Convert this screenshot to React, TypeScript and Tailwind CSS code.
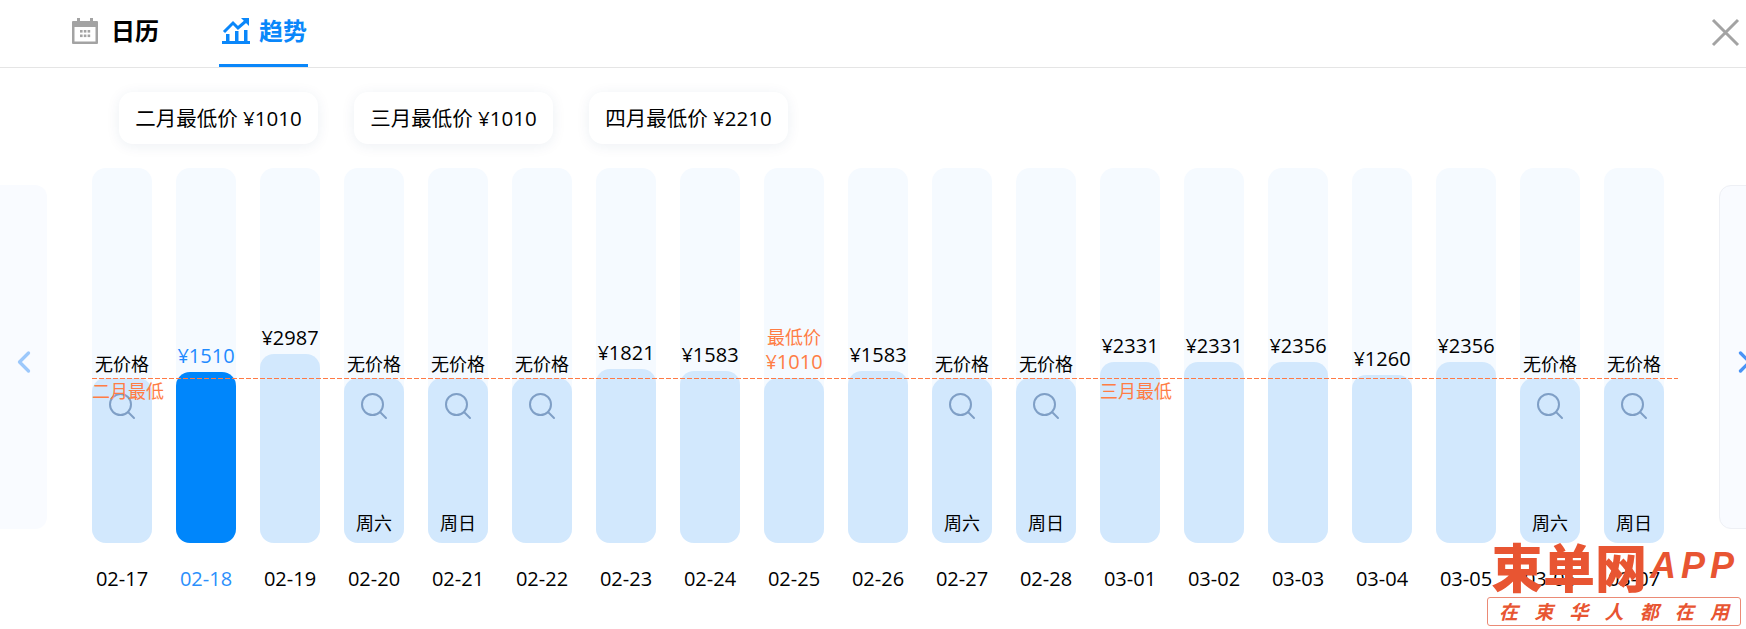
import { ChevronLeft, ChevronRight } from 'lucide-react';

interface DayItem {
  date: string;
  top: number; // y of the fill top, counted from the top of the track
  price?: string;
  week?: string;
  low?: boolean;
  active?: boolean;
}

const TRACK_H = 375;

const days: DayItem[] = [
  { date: '02-17', top: 210 },
  { date: '02-18', top: 204, price: '¥1510', active: true },
  { date: '02-19', top: 186, price: '¥2987' },
  { date: '02-20', top: 210, week: '周六' },
  { date: '02-21', top: 210, week: '周日' },
  { date: '02-22', top: 210 },
  { date: '02-23', top: 201, price: '¥1821' },
  { date: '02-24', top: 203, price: '¥1583' },
  { date: '02-25', top: 210, price: '¥1010', low: true },
  { date: '02-26', top: 203, price: '¥1583' },
  { date: '02-27', top: 210, week: '周六' },
  { date: '02-28', top: 210, week: '周日' },
  { date: '03-01', top: 194, price: '¥2331' },
  { date: '03-02', top: 194, price: '¥2331' },
  { date: '03-03', top: 194, price: '¥2356' },
  { date: '03-04', top: 207, price: '¥1260' },
  { date: '03-05', top: 194, price: '¥2356' },
  { date: '03-06', top: 210, week: '周六' },
  { date: '03-07', top: 210, week: '周日' },
];

const chips = ['二月最低价 ¥1010', '三月最低价 ¥1010', '四月最低价 ¥2210'];

function CalendarIcon() {
  return (
    <svg width="28" height="28" viewBox="0 0 28 28">
      <path
        fill="#a3a3a3"
        d="M6 1h3v3h10V1h3v3h4a1 1 0 0 1 1 1v21a1 1 0 0 1-1 1H2a1 1 0 0 1-1-1V5a1 1 0 0 1 1-1h4z"
      />
      <rect x="3.500" y="10" width="21" height="14.500" fill="#fff" />
      <g fill="#a3a3a3">
        <rect x="9" y="13" width="2.600" height="2.600" />
        <rect x="12.800" y="13" width="2.600" height="2.600" />
        <rect x="16.600" y="13" width="2.600" height="2.600" />
        <rect x="9" y="17.500" width="2.600" height="2.600" />
        <rect x="12.800" y="17.500" width="2.600" height="2.600" />
        <rect x="16.600" y="17.500" width="2.600" height="2.600" />
      </g>
    </svg>
  );
}

function TrendIcon() {
  return (
    <svg width="28" height="28" viewBox="0 0 28 28">
      <g fill="#0a87fa">
        <rect x="0" y="24" width="28" height="3" />
        <rect x="4" y="17" width="3.500" height="7" />
        <rect x="13" y="14" width="3.500" height="10" />
        <rect x="22" y="13" width="3.500" height="11" />
        <path d="M19 1h8v8z" />
      </g>
      <path d="M2 15l9-9 5 5 8-7" fill="none" stroke="#0a87fa" strokeWidth="3" />
    </svg>
  );
}

function SearchIcon() {
  return (
    <svg width="28" height="28" viewBox="0 0 28 28" fill="none" stroke="#7f9fc6" strokeWidth="2">
      <circle cx="12.500" cy="12.500" r="10.500" />
      <path d="M20 20l6 6" strokeLinecap="round" />
    </svg>
  );
}

function DayColumn({ item }: { item: DayItem }) {
  const noPrice = !item.price;
  return (
    <div className="flex w-[60px] flex-col items-center">
      <div
        className="flex w-full flex-col items-center justify-end overflow-hidden rounded-[14px] bg-[#f5faff]"
        style={{ height: TRACK_H }}
      >
        {item.low && <div className="text-[18px] leading-[22px] text-[#ff7d45]">最低价</div>}
        {noPrice ? (
          <div className="mb-[1px] whitespace-nowrap text-[18px] leading-[26px] text-black">无价格</div>
        ) : (
          <div
            className={`mb-[2px] whitespace-nowrap text-[20px] leading-[28px] ${
              item.low ? 'text-[#ff7d45]' : item.active ? 'text-[#1f8bff]' : 'text-black'
            }`}
          >
            {item.price}
          </div>
        )}
        <div
          className={`flex w-full flex-col items-center justify-between rounded-t-[14px] pt-[14px] pb-[7px] ${
            item.active ? 'bg-[#0086fb]' : 'bg-[#d2e8fd]'
          }`}
          style={{ height: TRACK_H - item.top }}
        >
          {noPrice ? <SearchIcon /> : <span />}
          {item.week && <div className="text-[18px] leading-[26px] text-black">{item.week}</div>}
        </div>
      </div>
      <div className={`mt-[22px] text-[20px] leading-[28px] ${item.active ? 'text-[#2b8ffb]' : 'text-black'}`}>
        {item.date}
      </div>
    </div>
  );
}

export default function App() {
  return (
    <div
      className="relative h-[629px] w-[1746px] overflow-hidden bg-white text-black"
      style={{ fontFamily: '"Open Sans", "Noto Sans CJK SC", sans-serif' }}
    >
      {/* 顶部标签 */}
      <div className="flex h-[68px] items-start border-b border-[#e5e5e5] pl-[71px]">
        <div className="flex h-[67px] items-center gap-[12px] pb-[5px]">
          <CalendarIcon />
          <span className="text-[24px] font-bold">日历</span>
        </div>
        <div className="ml-[60px] flex h-[67px] items-center gap-[9px] border-b-[3px] border-[#0a87fa] pr-[1px] pb-[2px] pl-[3px]">
          <TrendIcon />
          <span className="text-[24px] font-bold text-[#0a87fa]">趋势</span>
        </div>
        <svg className="mt-[18px] mr-[6px] ml-auto" width="29" height="29" viewBox="0 0 29 29" stroke="#a3a3a3" strokeWidth="3">
          <path d="M2 2l25 25M27 2L2 27" />
        </svg>
      </div>

      {/* 月份最低价 */}
      <div className="mt-[24px] ml-[119px] flex gap-[36px]">
        {chips.map((c) => (
          <div
            key={c}
            className="flex h-[52px] w-[199px] items-center justify-center rounded-[14px] bg-white text-[20.500px] whitespace-nowrap shadow-[0_2px_14px_rgba(30,60,110,0.08)]"
          >
            {c}
          </div>
        ))}
      </div>

      {/* 趋势图 */}
      <div className="relative mt-[24px] flex items-start">
        <div className="mt-[17px] flex h-[344px] w-[47px] shrink-0 items-center justify-center rounded-r-[12px] bg-[#f9fbff] pt-[10px]">
          <ChevronLeft size={36} strokeWidth={2.200} className="text-[#9cc8fb]" />
        </div>
        <div className="ml-[45px] flex shrink-0 gap-[24px]">
          {days.map((d) => (
            <DayColumn key={d.date} item={d} />
          ))}
        </div>
        <div className="mt-[17px] ml-[55px] flex h-[344px] w-[60px] shrink-0 items-center rounded-l-[12px] border border-[#eef0f5] bg-[#f9fbff] pt-[10px] pl-[7px]">
          <ChevronRight size={36} strokeWidth={2.200} className="text-[#4a94f5]" />
        </div>

        <div className="absolute top-[210px] left-[92px] h-px w-[1586px] bg-[repeating-linear-gradient(to_right,#ff7a45_0_5px,transparent_5px_7px)]" />
        <div className="absolute top-[210px] left-[92px] text-[18px] leading-[26px] whitespace-nowrap text-[#ff7d45]">二月最低</div>
        <div className="absolute top-[210px] left-[1100px] text-[18px] leading-[26px] whitespace-nowrap text-[#ff7d45]">三月最低</div>
      </div>

      {/* 水印 */}
      <div className="absolute top-[536px] left-[1491px] flex h-[60px] items-center whitespace-nowrap text-[#e85532]">
        <span className="w-[157px] text-[52px] leading-[60px] font-black" style={{ fontFamily: '"Noto Sans CJK SC", sans-serif' }}>
          束单网
        </span>
        <span className="ml-[2px] text-[36px] leading-[60px] font-bold tracking-[5px] italic" style={{ fontFamily: '"Liberation Sans", sans-serif' }}>
          APP
        </span>
      </div>
      <div
        className="absolute top-[597px] left-[1487px] flex h-[29px] w-[254px] items-center justify-between rounded-[3px] border border-[#eb8a75] bg-white/90 px-[11px] text-[19px] font-bold text-[#e85532] italic"
        style={{ fontFamily: '"Noto Sans CJK SC", sans-serif' }}
      >
        <span>在</span>
        <span>束</span>
        <span>华</span>
        <span>人</span>
        <span>都</span>
        <span>在</span>
        <span>用</span>
      </div>
    </div>
  );
}
